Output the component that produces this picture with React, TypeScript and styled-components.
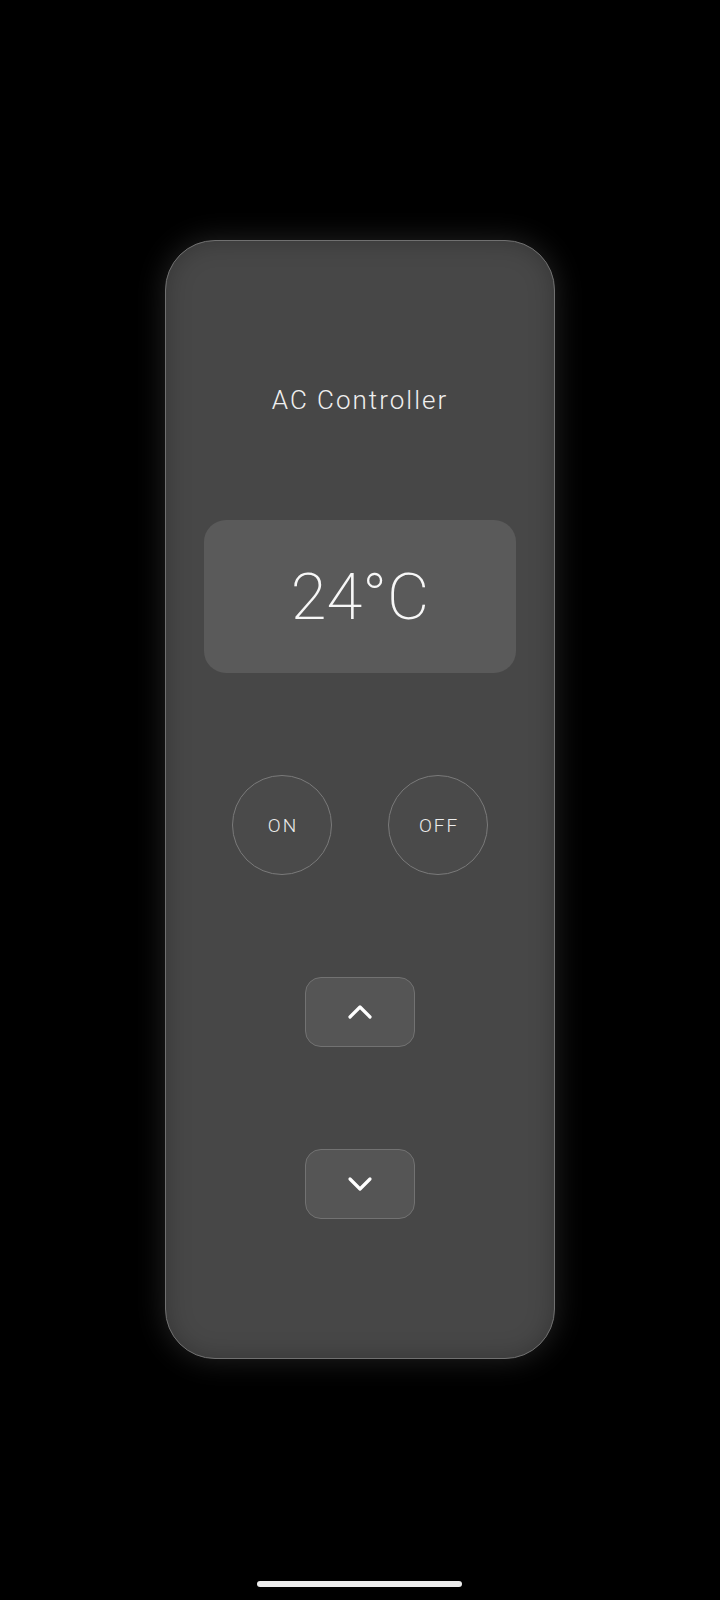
import React from 'react'
import styled, { createGlobalStyle } from 'styled-components'

const Global = createGlobalStyle`
  html, body {
    margin: 0;
    padding: 0;
    background: #000;
  }
  body {
    font-family: Roboto, 'Noto Sans', 'Liberation Sans', sans-serif;
    color: #f2f2f2;
  }
`

const Screen = styled.div`
  position: relative;
  width: 720px;
  height: 1600px;
  background: #000;
  display: flex;
  flex-direction: column;
  align-items: center;
  padding-top: 240px;
  box-sizing: border-box;
`

const Remote = styled.div`
  width: 390px;
  height: 1119px;
  box-sizing: border-box;
  border-radius: 50px;
  background: #474747;
  border: 1.5px solid #707070;
  box-shadow: 0 0 30px rgba(255, 255, 255, 0.14), inset 0 0 24px rgba(0, 0, 0, 0.25);
  display: flex;
  flex-direction: column;
  align-items: center;
  padding-top: 137px;
`

const Title = styled.h1`
  margin: 0;
  font-size: 26px;
  font-weight: 300;
  letter-spacing: 2px;
  line-height: 44px;
  color: #efefef;
`

const Display = styled.div`
  margin-top: 98px;
  width: 312px;
  height: 153px;
  border-radius: 22px;
  background: #5a5a5a;
  display: flex;
  align-items: center;
  justify-content: center;
  font-size: 65px;
  font-weight: 200;
  color: #f7f7f7;
`

const PowerRow = styled.div`
  margin-top: 102px;
  display: flex;
  gap: 56px;
`

const RoundButton = styled.button`
  width: 100px;
  height: 100px;
  border-radius: 50%;
  background: #4a4a4a;
  border: 1.5px solid #7a7a7a;
  color: #ececec;
  font-family: inherit;
  font-size: 19px;
  font-weight: 300;
  letter-spacing: 2px;
  padding: 0 0 0 2px;
  display: flex;
  align-items: center;
  justify-content: center;
`

const StepButton = styled.button<{ $gap: number }>`
  margin-top: ${({ $gap }) => $gap}px;
  width: 110px;
  height: 70px;
  border-radius: 16px;
  background: #555;
  border: 1.5px solid #727272;
  padding: 0;
  display: flex;
  align-items: center;
  justify-content: center;
`

const HomeBar = styled.div`
  position: absolute;
  left: 257px;
  bottom: 13px;
  width: 205px;
  height: 6px;
  border-radius: 3px;
  background: #ececec;
`

const Chevron = ({ up }: { up?: boolean }) => (
  <svg width="26" height="16" viewBox="0 0 26 16" fill="none">
    <path
      d={up ? 'M3 13 L13 3 L23 13' : 'M3 3 L13 13 L23 3'}
      stroke="#fff"
      strokeWidth="3.2"
      strokeLinecap="round"
      strokeLinejoin="round"
    />
  </svg>
)

export default function App() {
  return (
    <>
      <Global />
      <Screen>
        <Remote>
          <Title>AC Controller</Title>
          <Display>24°C</Display>
          <PowerRow>
            <RoundButton>ON</RoundButton>
            <RoundButton>OFF</RoundButton>
          </PowerRow>
          <StepButton $gap={102}>
            <Chevron up />
          </StepButton>
          <StepButton $gap={102}>
            <Chevron />
          </StepButton>
        </Remote>
        <HomeBar />
      </Screen>
    </>
  )
}
